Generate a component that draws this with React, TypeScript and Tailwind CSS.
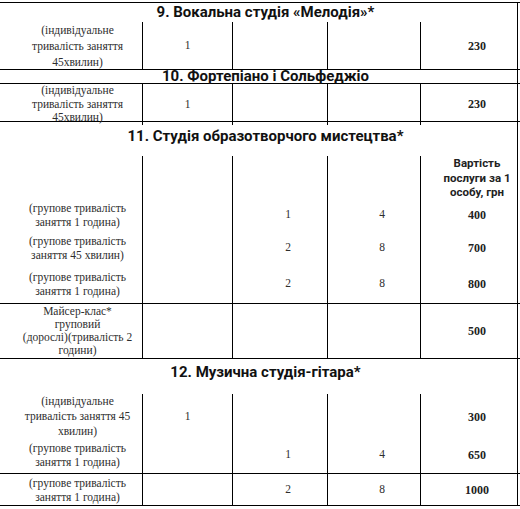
const cols = "grid grid-cols-[143px_90px_95px_93px_97px]";
const serif = "font-['Liberation_Serif','Times_New_Roman',serif] text-[11.5px] text-[#2e2e2e]";
const sans = "font-['Roboto','Liberation_Sans',sans-serif]";

type Row = {
  h: string;
  label?: string[];
  c2?: string;
  c3?: string;
  c4?: string;
  price?: string[];
  priceSans?: boolean;
  line?: boolean;
  lead?: string;
};

function Header({ title, h, pad }: { title: string; h: string; pad: string }) {
  return (
    <div className={`${h} w-[518px] border-r border-black flex justify-center pl-[14px] ${pad}`}>
      <span className={`${sans} font-bold text-[15px] leading-[12px] text-[#111]`}>{title}</span>
    </div>
  );
}

function DataRow({ r }: { r: Row }) {
  const cell = "border-r border-black flex items-center justify-center text-center";
  return (
    <div className={`${cols} ${r.h} ${r.line ? "border-b border-black" : ""}`}>
      <div className={`${cell} pl-[13px] ${serif} ${r.lead ?? "leading-[14px]"}`}>
        <div>
          {r.label?.map((l, i) => (
            <div key={i}>{l}</div>
          ))}
        </div>
      </div>
      <div className={`${cell} ${serif}`}>{r.c2}</div>
      <div className={`${cell} pl-4 ${serif}`}>{r.c3}</div>
      <div className={`${cell} pl-4 ${serif}`}>{r.c4}</div>
      <div
        className={`${cell} pl-4 font-bold ${
          r.priceSans
            ? `${sans} text-[11.5px] leading-[14.5px] text-[#222]`
            : "font-['Liberation_Serif','Times_New_Roman',serif] text-[12px] text-[#222]"
        }`}
      >
        <div>
          {r.price?.map((l, i) => (
            <div key={i}>{l}</div>
          ))}
        </div>
      </div>
    </div>
  );
}

const indiv = ["(індивідуальне", "тривалість заняття", "45хвилин)"];
const group1 = ["(групове тривалість", "заняття 1 година)"];

export default function App() {
  return (
    <div className="w-[520px] h-[509px] bg-white pt-[2px] overflow-hidden">
      <div className="border-t border-black">
        <Header title="9. Вокальна студія «Мелодія»*" h="h-[19px]" pad="pt-[3px]" />
        <DataRow r={{ h: "h-[48px]", label: indiv, c2: "1", price: ["230"], line: true, lead: "leading-[16px]" }} />
        <div className="border-b border-black">
          <Header title="10. Фортепіано і Сольфеджіо" h="h-[13px]" pad="pt-0" />
        </div>
        <DataRow r={{ h: "h-[38px]", label: indiv, c2: "1", price: ["230"], line: true, lead: "leading-[13.5px]" }} />
        <Header title="11. Студія образотворчого мистецтва*" h="h-[34px]" pad="pt-[8px]" />
        <DataRow r={{ h: "h-[43px]", price: ["Вартість", "послуги за 1", "особу, грн"], priceSans: true }} />
        <DataRow r={{ h: "h-[32px]", label: group1, c3: "1", c4: "4", price: ["400"] }} />
        <DataRow r={{ h: "h-[34px]", label: ["(групове тривалість", "заняття 45 хвилин)"], c3: "2", c4: "8", price: ["700"] }} />
        <DataRow r={{ h: "h-[39px]", label: group1, c3: "2", c4: "8", price: ["800"], line: true }} />
        <DataRow
          r={{
            h: "h-[55px]",
            label: ["Майсер-клас*", "груповий", "(дорослі)(тривалість 2", "години)"],
            price: ["500"],
            line: true,
            lead: "leading-[13px]",
          }}
        />
        <Header title="12. Музична студія-гітара*" h="h-[35px]" pad="pt-[7px]" />
        <DataRow
          r={{
            h: "h-[42px]",
            label: ["(індивідуальне", "тривалість заняття 45", "хвилин)"],
            c2: "1",
            price: ["300"],
            lead: "leading-[15px]",
          }}
        />
        <DataRow r={{ h: "h-[38px]", label: group1, c3: "1", c4: "4", price: ["650"], line: true }} />
        <DataRow r={{ h: "h-[32px]", label: group1, c3: "2", c4: "8", price: ["1000"], line: true }} />
      </div>
    </div>
  );
}
